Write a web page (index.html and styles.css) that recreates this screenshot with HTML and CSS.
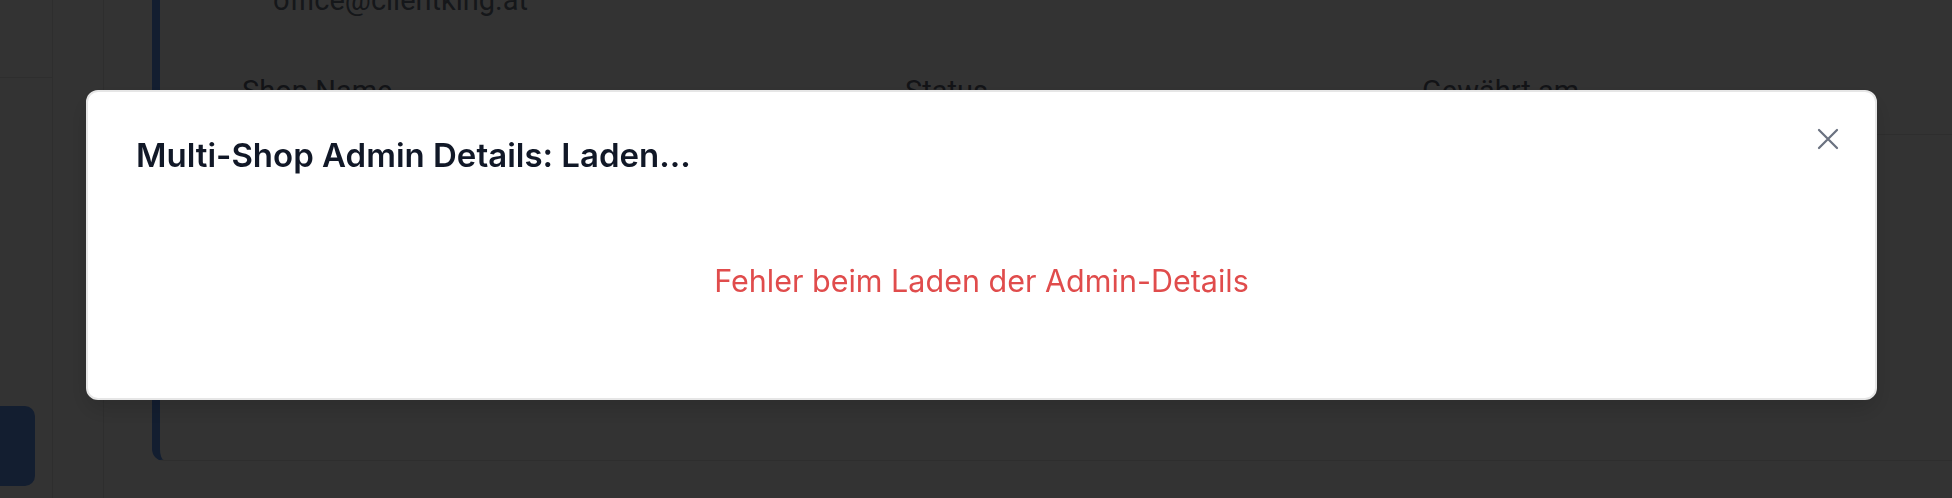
FILE: index.html
```html
<!DOCTYPE html>
<html lang="de">
<head>
<meta charset="utf-8">
<title>Multi-Shop Admin Details</title>
<link rel="stylesheet" href="styles.css">
</head>
<body>
<div class="app">
  <aside class="rail">
    <div class="rail-top"></div>
    <div class="rail-btn"></div>
  </aside>
  <nav class="subrail"></nav>
  <main class="main">
    <section class="card">
      <div class="contact">office@clientking.at</div>
      <div class="table">
        <div class="thead">
          <span>Shop Name</span>
          <span>Status</span>
          <span>Gewährt am</span>
        </div>
        <div class="tbody"></div>
      </div>
    </section>
  </main>
</div>

<div class="overlay">
  <div class="modal" role="dialog" aria-labelledby="modal-title">
    <button class="close" aria-label="Schließen">
      <svg viewBox="0 0 24 24" width="36" height="36" fill="none" stroke="currentColor" stroke-width="1.5" stroke-linecap="round" stroke-linejoin="round">
        <path d="M6 18L18 6M6 6l12 12"/>
      </svg>
    </button>
    <h2 id="modal-title" class="modal-title">Multi-Shop Admin Details: Laden...</h2>
    <div class="modal-body">
      <p class="error">Fehler beim Laden der Admin-Details</p>
    </div>
  </div>
</div>
</body>
</html>
```
FILE: styles.css
```css
* { box-sizing: border-box; }

html, body {
  margin: 0;
  padding: 0;
  height: 100%;
  overflow: hidden;
  background: #ffffff;
  font-family: Roboto, "Liberation Sans", sans-serif;
}

.app {
  display: flex;
  height: 498px;
  overflow: hidden;
}

.rail {
  width: 53px;
  flex: none;
  border-right: 1px solid #e6e6e6;
  display: flex;
  flex-direction: column;
}

.rail-top {
  height: 78px;
  border-bottom: 1px solid #e6e6e6;
}

.rail-btn {
  margin-top: auto;
  margin-bottom: 12px;
  width: 35px;
  height: 80px;
  background: #5f96f0;
  border-radius: 0 10px 10px 0;
}

.subrail {
  width: 51px;
  flex: none;
  border-right: 1px solid #e6e6e6;
}

.main {
  flex: 1;
  min-width: 0;
  padding-left: 48px;
}

.card {
  margin-top: -40px;
  margin-right: -40px;
  border-left: 8px solid #5f96f0;
  border-bottom: 1px solid #e6e6e6;
  border-radius: 0 0 0 12px;
  background: #ffffff;
}

.contact {
  padding: 21px 0 0 113px;
  font-size: 29px;
  line-height: 38px;
  color: #6b7280;
}

.thead {
  margin-top: 53px;
  display: grid;
  grid-template-columns: 663px 517px 1fr;
  padding: 0 0 24px 82px;
  border-bottom: 1px solid #e6e6e6;
  font-size: 29px;
  line-height: 38px;
  font-weight: 400;
  color: #5b6270;
}

.tbody {
  height: 325px;
}

.overlay {
  position: fixed;
  inset: 0;
  background: rgba(0, 0, 0, 0.8);
  display: flex;
  align-items: flex-start;
  padding: 90px 75px 0 86px;
}

.modal {
  position: relative;
  flex: 1;
  background: #ffffff;
  border: 2px solid #e6e6e6;
  border-radius: 12px;
  padding: 43px 48px 42px;
  box-shadow: 0 10px 25px rgba(0, 0, 0, 0.15);
  font-family: Inter, "Noto Sans", sans-serif;
}

.close {
  position: absolute;
  top: 29px;
  right: 29px;
  width: 36px;
  height: 36px;
  padding: 0;
  border: 0;
  background: transparent;
  color: #6b7280;
  display: flex;
  cursor: pointer;
}

.modal-title {
  margin: 0;
  font-size: 33px;
  line-height: 40px;
  font-weight: 600;
  color: #111827;
}

.modal-body {
  padding: 88px 0 57px;
}

.error {
  margin: 0;
  text-align: center;
  font-size: 30.5px;
  line-height: 36px;
  color: #e04c4c;
}
```
